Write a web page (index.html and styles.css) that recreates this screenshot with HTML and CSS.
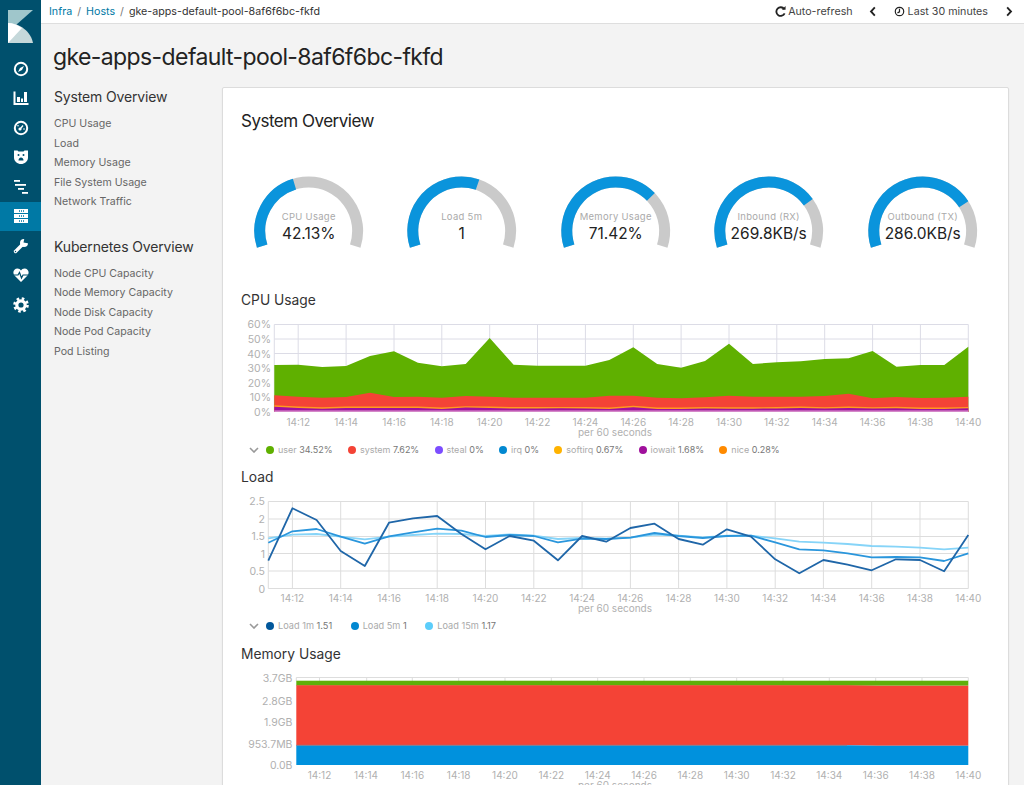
FILE: index.html
```html
<!doctype html>
<html lang="en-us">
<head>
    <meta name="viewport" content="width=device-width, initial-scale=1">
    <meta charset="utf-8">
    <title>gke-apps-default-pool-8af6f6bc-fkfd</title>
    <link rel="stylesheet" href="styles.css">
</head>
<body>
<div class="app">
    <!-- Left icon rail -->
    <nav class="rail">
        <svg class="logo" viewBox="0 0 25 33" width="25" height="33">
            <polygon points="0,0 25,0 0,22" fill="#9fc6cb"/>
            <path d="M0 13 C12 13 23 22 25 33 L0 33Z" fill="#c5d8da"/>
            <path d="M0 13 C5 13 10 15 14 18 L0 33Z" fill="#fff"/>
        </svg>
        <a class="rail-item"><svg viewBox="0 0 16 16" width="16" height="16"><circle cx="8" cy="8" r="6.2" class="ic-stroke"/><polygon points="11,5 9,9 5,11 7,7" class="ic-fill"/></svg></a>
        <a class="rail-item"><svg viewBox="0 0 16 16" width="16" height="16"><path d="M1.500 1.500v12.500h14" class="ic-stroke"/><rect x="4" y="7" width="3" height="5" class="ic-fill"/><rect x="8" y="8.500" width="2" height="3.500" class="ic-fill"/><rect x="11" y="2" width="3" height="10" class="ic-fill"/></svg></a>
        <a class="rail-item"><svg viewBox="0 0 16 16" width="16" height="16"><circle cx="8" cy="8" r="6.2" class="ic-stroke"/><circle cx="7" cy="9" r="1.6" class="ic-fill"/><path d="M7.500 8.500 10 5.500" class="ic-thin"/><circle cx="5" cy="5.800" r=".8" class="ic-fill"/><circle cx="11" cy="9" r=".8" class="ic-fill"/></svg></a>
        <a class="rail-item"><svg viewBox="0 0 16 16" width="16" height="16"><path d="M1 1.500h3.500l1 1h5l1-1H15v7c0 4-3.500 6.500-7 6.500S1 12.500 1 8.500Z" class="ic-fill"/><circle cx="5.500" cy="6" r="1" class="ic-cut"/><circle cx="10.500" cy="6" r="1" class="ic-cut"/><path d="M5.500 11.500c0-4 5-4 5 0Z" class="ic-cut"/></svg></a>
        <a class="rail-item"><svg viewBox="0 0 16 16" width="16" height="16"><rect x="1" y="1" width="6" height="1.800" class="ic-fill"/><rect x="2" y="5" width="11" height="1.800" class="ic-fill"/><rect x="5" y="9" width="6" height="1.800" class="ic-fill"/><rect x="9" y="13" width="6" height="1.800" class="ic-fill"/></svg></a>
        <a class="rail-item active"><svg viewBox="0 0 16 16" width="16" height="16"><rect x="1" y="1" width="14" height="4" class="ic-fill"/><rect x="1" y="6" width="14" height="4" class="ic-fill"/><rect x="1" y="11" width="14" height="4" class="ic-fill"/><path d="M6 3h6M6 8h6M6 13h6" class="ic-dash"/></svg></a>
        <a class="rail-item"><svg viewBox="0 0 16 16" width="16" height="16"><path d="M2.500 13.500 9.500 6.500" class="ic-bold"/><circle cx="11" cy="5" r="4" class="ic-fill"/><polygon points="10.500,4.500 11.500,0 16,0 16,5.500" class="ic-cut"/><circle cx="2.500" cy="13.500" r=".7" class="ic-cut"/></svg></a>
        <a class="rail-item"><svg viewBox="0 0 16 16" width="16" height="16"><path d="M8 15 1.500 8.500C-1 5.500 1 1.500 4.500 1.500 6 1.500 7.300 2.300 8 3.500 8.700 2.300 10 1.500 11.500 1.500 15 1.500 17 5.500 14.500 8.500Z" class="ic-fill"/><path d="M1 8h4l1.500-2.500L8.500 11l1.500-3h5" class="ic-pulse"/></svg></a>
        <a class="rail-item"><svg viewBox="0 0 16 16" width="16" height="16"><circle cx="8" cy="8" r="4.200" class="ic-gear"/><circle cx="8" cy="8" r="6.500" class="ic-teeth"/></svg></a>
    </nav>

    <div class="page">
        <header class="topbar">
            <div class="crumbs">
                <a>Infra</a><span class="sep">/</span><a>Hosts</a><span class="sep">/</span><span class="current">gke-apps-default-pool-8af6f6bc-fkfd</span>
            </div>
            <div class="timepicker">
                <svg class="tp-icon" viewBox="0 0 12 12" width="11" height="11"><path d="M10 3.300A4.700 4.700 0 1 0 10.500 8" class="tp-line"/><polygon points="7.500,4 11.500,4 11.500,0" class="tp-fill"/></svg>
                <span class="tp-refresh">Auto-refresh</span>
                <svg class="tp-chev" viewBox="0 0 8 12" width="8" height="11"><path d="M6 1.500 1.800 6 6 10.500" class="tp-line"/></svg>
                <svg class="tp-icon tp-clock" viewBox="0 0 12 12" width="11" height="11"><circle cx="6" cy="6" r="4.600" class="tp-thin"/><path d="M6 3v3.300L3.800 7.500" class="tp-thin"/></svg>
                <span class="tp-range">Last 30 minutes</span>
                <svg class="tp-chev" viewBox="0 0 8 12" width="8" height="11"><path d="M2 1.500 6.200 6 2 10.500" class="tp-line"/></svg>
            </div>
        </header>

        <h1 class="host-title">gke-apps-default-pool-8af6f6bc-fkfd</h1>

        <div class="columns">
            <aside class="sidenav">
                <h2>System Overview</h2>
                <ul>
                    <li>CPU Usage</li>
                    <li>Load</li>
                    <li>Memory Usage</li>
                    <li>File System Usage</li>
                    <li>Network Traffic</li>
                </ul>
                <h2 class="second">Kubernetes Overview</h2>
                <ul>
                    <li>Node CPU Capacity</li>
                    <li>Node Memory Capacity</li>
                    <li>Node Disk Capacity</li>
                    <li>Node Pod Capacity</li>
                    <li>Pod Listing</li>
                </ul>
            </aside>

            <main class="card">
                <h2 class="card-title">System Overview</h2>

                <div class="gauges">
                    <svg class="gauge" viewBox="0 0 153.600 110">
                        <path d="M30.200 71.100A49 49 0 1 1 123.400 71.100" pathLength="216" class="arc-bg"/>
                        <path d="M30.200 71.100A49 49 0 1 1 123.400 71.100" pathLength="216" class="arc-val" stroke-dasharray="91 216"/>
                        <text x="76.800" y="44.500" class="g-label">CPU Usage</text>
                        <text x="76.800" y="64.500" class="g-value">42.13%</text>
                    </svg>
                    <svg class="gauge" viewBox="0 0 153.600 110">
                        <path d="M30.200 71.100A49 49 0 1 1 123.400 71.100" pathLength="216" class="arc-bg"/>
                        <path d="M30.200 71.100A49 49 0 1 1 123.400 71.100" pathLength="216" class="arc-val" stroke-dasharray="127 216"/>
                        <text x="76.800" y="44.500" class="g-label">Load 5m</text>
                        <text x="76.800" y="64.500" class="g-value">1</text>
                    </svg>
                    <svg class="gauge" viewBox="0 0 153.600 110">
                        <path d="M30.200 71.100A49 49 0 1 1 123.400 71.100" pathLength="216" class="arc-bg"/>
                        <path d="M30.200 71.100A49 49 0 1 1 123.400 71.100" pathLength="216" class="arc-val" stroke-dasharray="154 216"/>
                        <text x="76.800" y="44.500" class="g-label">Memory Usage</text>
                        <text x="76.800" y="64.500" class="g-value">71.42%</text>
                    </svg>
                    <svg class="gauge" viewBox="0 0 153.600 110">
                        <path d="M30.200 71.100A49 49 0 1 1 123.400 71.100" pathLength="216" class="arc-bg"/>
                        <path d="M30.200 71.100A49 49 0 1 1 123.400 71.100" pathLength="216" class="arc-val" stroke-dasharray="162 216"/>
                        <text x="76.800" y="44.500" class="g-label">Inbound (RX)</text>
                        <text x="76.800" y="64.500" class="g-value">269.8KB/s</text>
                    </svg>
                    <svg class="gauge" viewBox="0 0 153.600 110">
                        <path d="M30.200 71.100A49 49 0 1 1 123.400 71.100" pathLength="216" class="arc-bg"/>
                        <path d="M30.200 71.100A49 49 0 1 1 123.400 71.100" pathLength="216" class="arc-val" stroke-dasharray="165 216"/>
                        <text x="76.800" y="44.500" class="g-label">Outbound (TX)</text>
                        <text x="76.800" y="64.500" class="g-value">286.0KB/s</text>
                    </svg>
                </div>

                <!-- CPU usage chart -->
                <h3 class="chart-title first">CPU Usage</h3>
                <svg class="chart chart-cpu" viewBox="241 315 749 125">
                    <g class="grid">
                        <path d="M274.300 324.500H968.300M274.300 339H968.300M274.300 353.500H968.300M274.300 368H968.300M274.300 382.500H968.300M274.300 397H968.300M274.300 411.500H968.300"/>
                        <path d="M274.300 324.500V411.500M298.200 324.500V411.500M346.100 324.500V411.500M394 324.500V411.500M441.800 324.500V411.500M489.700 324.500V411.500M537.500 324.500V411.500M585.400 324.500V411.500M633.300 324.500V411.500M681.100 324.500V411.500M729 324.500V411.500M776.800 324.500V411.500M824.700 324.500V411.500M872.600 324.500V411.500M920.400 324.500V411.500M968.300 324.500V411.500"/>
                    </g>
                    <polygon fill="#5fb000" points="274.300,365 298.200,364.700 322.200,367 346.100,366 370,356 394,351.300 417.900,362.700 441.800,366.300 465.700,364 489.700,338 513.600,364.700 537.500,365.700 561.500,365.700 585.400,365.700 609.300,360 633.300,347.300 657.200,364 681.100,367.700 705,361 729,343.700 752.900,364 776.800,362.300 800.800,361.300 824.700,359 848.600,358.300 872.600,351 896.500,366.700 920.400,365 944.300,365 968.300,346.700 968.300,412 274.300,412"/>
                    <polygon fill="#f44336" points="274.300,395.300 298.200,396.700 322.200,397.700 346.100,397 370,392.700 394,397 417.900,396.700 441.800,397.700 465.700,396 489.700,396.700 513.600,397.700 537.500,397.700 561.500,397.700 585.400,397.700 609.300,395.700 633.300,395.700 657.200,397.700 681.100,398.300 705,397.300 729,395.700 752.900,396.700 776.800,396.700 800.800,396.700 824.700,396 848.600,393.700 872.600,398.300 896.500,397 920.400,398 944.300,397.700 968.300,396.700 968.300,412 274.300,412"/>
                    <polygon fill="#ff9a1f" points="274.300,405.300 298.200,406.600 322.200,407.300 346.100,406.600 370,406.600 394,406.600 417.900,406.600 441.800,407.600 465.700,406.200 489.700,406.600 513.600,407.100 537.500,407.100 561.500,406.900 585.400,407.100 609.300,407.600 633.300,405.800 657.200,407.600 681.100,407.600 705,407 729,407.300 752.900,407.300 776.800,407 800.800,406.600 824.700,407.200 848.600,406.600 872.600,407.200 896.500,406.800 920.400,407.500 944.300,407.500 968.300,406.900 968.300,412 274.300,412"/>
                    <polygon fill="#a0109c" points="274.300,406.700 298.200,408 322.200,408.700 346.100,408 370,408 394,408 417.900,408 441.800,409 465.700,407.600 489.700,408 513.600,408.500 537.500,408.500 561.500,408.300 585.400,408.500 609.300,409 633.300,407.200 657.200,409 681.100,409 705,408.400 729,408.700 752.900,408.700 776.800,408.400 800.800,408 824.700,408.600 848.600,408 872.600,408.600 896.500,408.200 920.400,408.900 944.300,408.900 968.300,408.300 968.300,412 274.300,412"/>
                    <rect x="274.300" y="410.400" width="694" height="1.600" fill="#d488c8"/>
                    <g class="y-labels">
                        <text x="271" y="328">60%</text>
                        <text x="271" y="343">50%</text>
                        <text x="271" y="357.500">40%</text>
                        <text x="271" y="372">30%</text>
                        <text x="271" y="387">20%</text>
                        <text x="271" y="401">10%</text>
                        <text x="271" y="416">0%</text>
                    </g>
                    <g class="x-labels">
                        <text x="298.200" y="426">14:12</text>
                        <text x="346.100" y="426">14:14</text>
                        <text x="394" y="426">14:16</text>
                        <text x="441.800" y="426">14:18</text>
                        <text x="489.700" y="426">14:20</text>
                        <text x="537.500" y="426">14:22</text>
                        <text x="585.400" y="426">14:24</text>
                        <text x="633.300" y="426">14:26</text>
                        <text x="681.100" y="426">14:28</text>
                        <text x="729" y="426">14:30</text>
                        <text x="776.800" y="426">14:32</text>
                        <text x="824.700" y="426">14:34</text>
                        <text x="872.600" y="426">14:36</text>
                        <text x="920.400" y="426">14:38</text>
                        <text x="968.300" y="426">14:40</text>
                        <text x="615" y="436">per 60 seconds</text>
                    </g>
                </svg>
                <div class="legend">
                    <svg class="chev" viewBox="0 0 10 6" width="10" height="6"><path d="M1 1l4 4 4-4"/></svg>
                    <span class="lg"><i class="dot c-user"></i><em>user</em> 34.52%</span>
                    <span class="lg"><i class="dot c-system"></i><em>system</em> 7.62%</span>
                    <span class="lg"><i class="dot c-steal"></i><em>steal</em> 0%</span>
                    <span class="lg"><i class="dot c-irq"></i><em>irq</em> 0%</span>
                    <span class="lg"><i class="dot c-softirq"></i><em>softirq</em> 0.67%</span>
                    <span class="lg"><i class="dot c-iowait"></i><em>iowait</em> 1.68%</span>
                    <span class="lg"><i class="dot c-nice"></i><em>nice</em> 0.28%</span>
                </div>

                <!-- Load chart -->
                <h3 class="chart-title">Load</h3>
                <svg class="chart chart-load" viewBox="241 492 749 124">
                    <g class="grid grid-load">
                        <path d="M268.300 501.500H968.300M268.300 519H968.300M268.300 536.500H968.300M268.300 553.500H968.300M268.300 571H968.300M268.300 588.500H968.300"/>
                        <path d="M268.300 501.500V588.500M292.400 501.500V588.500M340.700 501.500V588.500M389 501.500V588.500M437.200 501.500V588.500M485.500 501.500V588.500M533.800 501.500V588.500M582.100 501.500V588.500M630.400 501.500V588.500M678.600 501.500V588.500M726.900 501.500V588.500M775.200 501.500V588.500M823.400 501.500V588.500M871.700 501.500V588.500M920 501.500V588.500M968.300 501.500V588.500"/>
                    </g>
                    <polyline class="ln ln-15" points="268.300,538.300 292.400,534.700 316.600,534 340.700,536.700 364.800,539.300 389,536.700 413.100,535 437.200,533.700 461.400,534 485.500,536 509.700,534.300 533.800,535.700 557.900,539 582.100,538 606.200,538.700 630.400,537.700 654.500,534.700 678.600,535.700 702.800,537.300 726.900,535.700 751,535.700 775.200,538.300 799.300,541.700 823.400,542.700 847.600,544 871.700,546 895.900,546.700 920,547.700 944.100,549.300 968.300,547.700"/>
                    <polyline class="ln ln-5" points="268.300,542.700 292.400,531.300 316.600,529 340.700,536.700 364.800,543.700 389,536.300 413.100,532.300 437.200,528.700 461.400,530.700 485.500,537 509.700,535 533.800,536 557.900,542.300 582.100,538.700 606.200,539 630.400,537.700 654.500,533 678.600,536 702.800,538 726.900,536 751,535.700 775.200,542.300 799.300,549.300 823.400,550.300 847.600,553.300 871.700,557.300 895.900,557 920,557.300 944.100,561 968.300,553.300"/>
                    <polyline class="ln ln-1" points="268.300,560.700 292.400,508.300 316.600,520 340.700,551 364.800,566 389,522.700 413.100,518.300 437.200,516 461.400,534 485.500,549.300 509.700,536 533.800,540.700 557.900,560.300 582.100,536 606.200,541.700 630.400,528 654.500,523.700 678.600,539 702.800,544.700 726.900,529.300 751,536.700 775.200,559.300 799.300,573.300 823.400,560 847.600,564.700 871.700,570.300 895.900,559.300 920,560 944.100,571.300 968.300,535"/>
                    <g class="y-labels">
                        <text x="265" y="505">2.5</text>
                        <text x="265" y="523">2</text>
                        <text x="265" y="540">1.5</text>
                        <text x="265" y="557.500">1</text>
                        <text x="265" y="575">0.5</text>
                        <text x="265" y="592.500">0</text>
                    </g>
                    <g class="x-labels">
                        <text x="292.400" y="602">14:12</text>
                        <text x="340.700" y="602">14:14</text>
                        <text x="389" y="602">14:16</text>
                        <text x="437.200" y="602">14:18</text>
                        <text x="485.500" y="602">14:20</text>
                        <text x="533.800" y="602">14:22</text>
                        <text x="582.100" y="602">14:24</text>
                        <text x="630.400" y="602">14:26</text>
                        <text x="678.600" y="602">14:28</text>
                        <text x="726.900" y="602">14:30</text>
                        <text x="775.200" y="602">14:32</text>
                        <text x="823.400" y="602">14:34</text>
                        <text x="871.700" y="602">14:36</text>
                        <text x="920" y="602">14:38</text>
                        <text x="968.300" y="602">14:40</text>
                        <text x="615" y="612">per 60 seconds</text>
                    </g>
                </svg>
                <div class="legend legend-load">
                    <svg class="chev" viewBox="0 0 10 6" width="10" height="6"><path d="M1 1l4 4 4-4"/></svg>
                    <span class="lg"><i class="dot c-load1"></i><em>Load 1m</em> 1.51</span>
                    <span class="lg"><i class="dot c-load5"></i><em>Load 5m</em> 1</span>
                    <span class="lg"><i class="dot c-load15"></i><em>Load 15m</em> 1.17</span>
                </div>

                <!-- Memory chart, runs off the bottom of the window -->
                <h3 class="chart-title chart-title-mem">Memory Usage</h3>
                <svg class="chart chart-mem" viewBox="241 669 749 124">
                    <path class="grid-top" d="M296.300 677.500H968.300M296.300 677.500V681M319.500 677.500V681M366.700 677.500V681M412.300 677.500V681M458.700 677.500V681M505 677.500V681M551.300 677.500V681M597.700 677.500V681M644 677.500V681M690.300 677.500V681M736.700 677.500V681M783 677.500V681M829.300 677.500V681M875.700 677.500V681M922 677.500V681M968.300 677.500V681"/>
                    <rect x="296.300" y="680.700" width="672" height="5" fill="#5fae0a"/>
                    <polygon fill="#f44336" points="296.300,685.300 847,685.300 877,685.800 968.300,685.800 968.300,745.800 877,745.800 847,745.300 296.300,745.300"/>
                    <polygon fill="#0091dd" points="296.300,745.300 847,745.300 877,745.800 968.300,745.800 968.300,765 296.300,765"/>
                    <path d="M296.300 745.300H847" class="mem-seam"/>
                    <g class="y-labels">
                        <text x="292.500" y="682">3.7GB</text>
                        <text x="292.500" y="704.500">2.8GB</text>
                        <text x="292.500" y="726">1.9GB</text>
                        <text x="292.500" y="747.500">953.7MB</text>
                        <text x="292.500" y="769">0.0B</text>
                    </g>
                    <g class="x-labels">
                        <text x="319.500" y="779">14:12</text>
                        <text x="366" y="779">14:14</text>
                        <text x="412.300" y="779">14:16</text>
                        <text x="458.700" y="779">14:18</text>
                        <text x="505" y="779">14:20</text>
                        <text x="551.300" y="779">14:22</text>
                        <text x="597.700" y="779">14:24</text>
                        <text x="644" y="779">14:26</text>
                        <text x="690.300" y="779">14:28</text>
                        <text x="736.700" y="779">14:30</text>
                        <text x="783" y="779">14:32</text>
                        <text x="829.300" y="779">14:34</text>
                        <text x="875.700" y="779">14:36</text>
                        <text x="922" y="779">14:38</text>
                        <text x="968.300" y="779">14:40</text>
                        <text x="615" y="789">per 60 seconds</text>
                    </g>
                </svg>
            </main>
        </div>
    </div>
</div>
</body>
</html>
```

FILE: styles.css
```css
html, body {
    width: 100%;
    height: 100%;
}

body {
    margin: 0;
    padding: 0;
    overflow: hidden;
    font-family: "Inter", "Liberation Sans", sans-serif;
    color: #333;
    background: #f3f3f3;
}

.app {
    display: flex;
    height: 785px;
    overflow: hidden;
}

/* Left icon rail */
.rail {
    flex: 0 0 41px;
    display: flex;
    flex-direction: column;
    align-items: stretch;
    background: #00506d;
}

.logo {
    display: block;
    margin: 10px 0 11px 8px;
}

.rail-item {
    display: flex;
    align-items: center;
    justify-content: center;
    height: 29.5px;
}

.rail-item.active {
    background: #0079a5;
}

.ic-stroke { fill: none; stroke: #fff; stroke-width: 2; }
.ic-thin { fill: none; stroke: #fff; stroke-width: 1.3; }
.ic-bold { fill: none; stroke: #fff; stroke-width: 3.4; stroke-linecap: round; }
.ic-fill { fill: #fff; }
.ic-cut { fill: #00506d; }
.ic-dash { fill: none; stroke: #0079a5; stroke-width: 1.6; stroke-dasharray: 1 1; }
.ic-pulse { fill: none; stroke: #00506d; stroke-width: 1.2; }
.ic-gear { fill: none; stroke: #fff; stroke-width: 3.2; }
.ic-teeth { fill: none; stroke: #fff; stroke-width: 2.6; stroke-dasharray: 2.55 2.55; }

.page {
    flex: 1;
    min-width: 0;
}

/* Top bar */
.topbar {
    display: flex;
    align-items: center;
    justify-content: space-between;
    height: 23px;
    padding: 0 11px 0 8px;
    font-size: 10.7px;
    background: #fff;
    border-bottom: 1px solid #dedede;
}

.crumbs a {
    color: #0079a5;
}

.crumbs .sep {
    margin: 0 5px;
    color: #777;
}

.crumbs .current {
    color: #333;
}

.timepicker {
    display: flex;
    align-items: center;
    color: #444;
}

.tp-line { fill: none; stroke: #222; stroke-width: 2; }
.tp-thin { fill: none; stroke: #222; stroke-width: 1.3; }
.tp-fill { fill: #222; }

.tp-icon {
    margin-right: 2px;
}

.tp-refresh {
    margin-right: 16px;
}

.tp-clock {
    margin-left: 17px;
    margin-right: 3px;
}

.tp-range {
    margin-right: 17px;
}

/* Host heading */
.host-title {
    margin: 0;
    padding: 18px 0 0 12px;
    height: 45px;
    box-sizing: content-box;
    font-size: 23px;
    letter-spacing: -0.6px;
    line-height: 30px;
    font-weight: 400;
    color: #222;
}

.columns {
    display: flex;
    padding: 0 15px 0 12px;
}

/* Section links on the left */
.sidenav {
    flex: 0 0 169px;
    padding-top: 1px;
}

.sidenav h2 {
    margin: 0 0 8px 1px;
    font-size: 14px;
    letter-spacing: -0.15px;
    line-height: 18px;
    font-weight: 400;
    color: #333;
}

.sidenav h2.second {
    margin-top: 26px;
}

.sidenav ul {
    margin: 0;
    padding: 0 0 0 1px;
    list-style: none;
}

.sidenav li {
    font-size: 10.6px;
    line-height: 19.5px;
    color: #666;
}

/* Main card */
.card {
    flex: 1;
    min-width: 0;
    height: 760px;
    padding: 21px 18px 0;
    background: #fff;
    border: 1px solid #dcdcdc;
    border-radius: 2px;
    box-shadow: 0 1px 2px rgba(0, 0, 0, 0.06);
}

.card-title {
    margin: 0;
    font-size: 17px;
    letter-spacing: -0.5px;
    line-height: 24px;
    font-weight: 400;
    color: #222;
}

.gauges {
    display: flex;
    margin: 42px -9px 0;
}

.gauge {
    flex: 1;
    display: block;
    height: 110px;
    min-width: 0;
}

.arc-bg { fill: none; stroke: #cacaca; stroke-width: 11; }
.arc-val { fill: none; stroke: #0a94dc; stroke-width: 11; }

.g-label {
    font-size: 9.5px;
    letter-spacing: 0.3px;
    fill: #aaa;
    text-anchor: middle;
}

.g-value {
    font-size: 15.5px;
    fill: #222;
    text-anchor: middle;
}

/* Charts */
.chart-title {
    margin: 10px 0 6px;
    font-size: 13.8px;
    line-height: 18px;
    font-weight: 400;
    color: #333;
}

.chart-title.first {
    margin-top: 6px;
}

.chart-title-mem {
    margin-top: 11px;
}

.chart {
    display: block;
    width: 749px;
}

.chart-cpu { height: 125px; }
.chart-load { height: 124px; }
.chart-mem { height: 124px; }

.grid path {
    fill: none;
    stroke: #dcdce6;
    stroke-width: 1;
}

.grid-load path {
    stroke: #ddd;
}

.grid-top {
    fill: none;
    stroke: #ddd;
    stroke-width: 1;
}

.mem-seam {
    fill: none;
    stroke: #8a7a88;
    stroke-width: 1;
}

.y-labels text,
.x-labels text {
    font-size: 10px;
    fill: #b0b0b0;
}

.y-labels text {
    text-anchor: end;
    font-size: 10.5px;
}

.x-labels text {
    text-anchor: middle;
}

.ln {
    fill: none;
    stroke-width: 1.8;
    stroke-linejoin: round;
}

.ln-1 { stroke: #1f66a8; }
.ln-5 { stroke: #2a96dc; }
.ln-15 { stroke: #86d4f8; }

/* Legends under the charts */
.legend {
    display: flex;
    align-items: center;
    height: 17px;
    margin-top: 1px;
    padding-left: 8px;
    font-size: 9px;
    color: #777;
}

.chev {
    margin-right: 7px;
}

.chev path {
    fill: none;
    stroke: #999;
    stroke-width: 1.6;
}

.lg {
    display: flex;
    align-items: center;
    margin-right: 15.3px;
    white-space: pre;
}

.legend-load .lg {
    margin-right: 18.5px;
}

.legend-load {
    font-size: 9.2px;
}

.lg em {
    font-style: normal;
    color: #aaa;
}

.dot {
    width: 8px;
    height: 8px;
    margin-right: 4px;
    border-radius: 50%;
}

.c-user { background: #5fb000; }
.c-system { background: #f44336; }
.c-steal { background: #7c4dff; }
.c-irq { background: #0288d1; }
.c-softirq { background: #ffb300; }
.c-iowait { background: #a0109c; }
.c-nice { background: #ff8a00; }
.c-load1 { background: #01579b; }
.c-load5 { background: #0288d1; }
.c-load15 { background: #5ccdfa; }
```
